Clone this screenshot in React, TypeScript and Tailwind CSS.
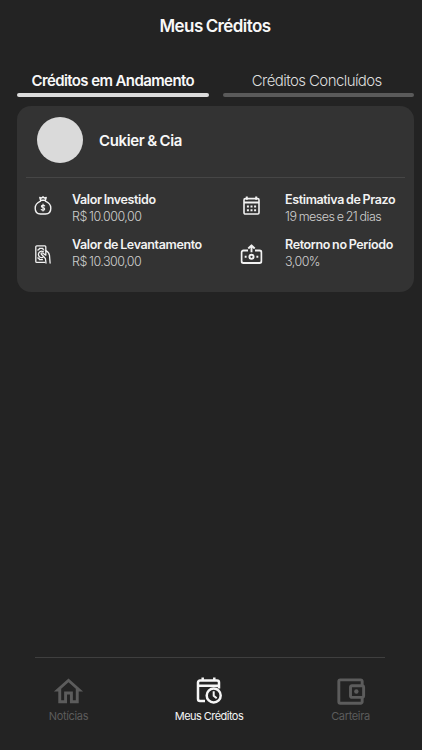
import type { ReactNode } from "react";
import { MdOutlineAccountBalanceWallet, MdOutlineHome } from "react-icons/md";

export default function MeusCreditos() {
  return (
    <div className="flex h-[750px] w-[422px] flex-col overflow-hidden bg-[#232323] font-['Inter',sans-serif] text-white [word-spacing:-0.7px]">
      <header className="h-[72px] pt-[14px] pl-2 text-center">
        <h1 className="text-[17px] leading-[25px] font-semibold tracking-[-0.59px] text-[#f8f8f8]">Meus Créditos</h1>
      </header>

      {/* Tabs */}
      <nav className="mx-[17px] mr-[8px] grid shrink-0 grid-cols-2 gap-[14px] text-center text-[15px] leading-[18px]">
        <button className="h-[25px] border-0 text-[#f8f8f8]">
          <span className="block h-[21px] font-semibold tracking-[-0.6px]">Créditos em Andamento</span>
          <span className="block h-[3.5px] rounded-full bg-[#dcdcdc]" />
        </button>
        <button className="h-[25px] border-0 text-[#dedede]">
          <span className="block h-[21px] pr-[3px] font-light tracking-[-0.58px]">Créditos Concluídos</span>
          <span className="block h-[3.5px] rounded-full bg-[#5a5a5a]" />
        </button>
      </nav>

      {/* Credit card */}
      <section className="mt-[9px] mr-[8px] ml-[17px] h-[186px] shrink-0 rounded-[14px] bg-[#333333] px-[9px]">
        <div className="flex h-[72px] items-center border-b border-[#464646] pb-[3px] pl-[11px]">
          <div className="size-[46px] rounded-full bg-[#dadada]" />
          <h2 className="ml-4 pt-[2px] text-[15px] font-semibold tracking-[-0.34px] text-[#f8f8f8]">Cukier &amp; Cia</h2>
        </div>
        <div className="grid grid-cols-[208px_1fr] gap-y-[11px] pt-[13px]">
          <Detail icon={<MoneyBagIcon />} label="Valor Investido" value="R$ 10.000,00" iconClass="h-[29px]" />
          <Detail
            icon={<CalendarIcon />}
            label="Estimativa de Prazo"
            value="19 meses e 21 dias"
            iconClass="h-[29px]"
            textClass="ml-[17px]"
          />
          <Detail icon={<CashHandIcon />} label="Valor de Levantamento" value="R$ 10.300,00" iconClass="h-[36px]" />
          <Detail
            icon={<CashReturnIcon />}
            label="Retorno no Período"
            value="3,00%"
            iconClass="h-[36px]"
            textClass="ml-[17px]"
          />
        </div>
      </section>

      {/* Bottom navigation */}
      <footer className="mr-[37px] ml-[35px] mt-auto h-[93px] shrink-0 border-t border-[#3f3f3f] pt-[16px] text-[11px]">
        <div className="flex justify-between">
          <NavItem className="w-[67px] tracking-[-0.35px] text-[#5c5c5c]" icon={<MdOutlineHome size={35} />} label="Notícias" />
          <NavItem className="w-[80px] tracking-[-0.55px] text-[#f5f5f5]" icon={<CalendarClockIcon />} label="Meus Créditos" />
          <NavItem
            className="w-[69px] tracking-[-0.35px] text-[#5c5c5c]"
            icon={<MdOutlineAccountBalanceWallet size={35} />}
            label="Carteira"
          />
        </div>
      </footer>
    </div>
  );
}

type DetailProps = { icon: ReactNode; label: string; value: string; iconClass: string; textClass?: string };

function Detail({ icon, label, value, iconClass, textClass = "ml-3" }: DetailProps) {
  return (
    <div className="flex h-[34px] items-start">
      <div className={`flex w-[34px] shrink-0 items-center justify-center ${iconClass}`}>{icon}</div>
      <div className={`whitespace-nowrap text-[12.5px] leading-[17px] ${textClass}`}>
        <p className="font-semibold tracking-[-0.37px] text-[#f2f2f2]">{label}</p>
        <p className="font-light tracking-[-0.52px] text-[#cfcfcf]">{value}</p>
      </div>
    </div>
  );
}

function NavItem({ icon, label, className }: { icon: ReactNode; label: string; className: string }) {
  return (
    <button className={`flex flex-col items-center ${className}`}>
      <span className="flex h-[34px] items-center">{icon}</span>
      <span className="whitespace-nowrap leading-4">{label}</span>
    </button>
  );
}

function MoneyBagIcon() {
  return (
    <svg width="18" height="19" viewBox="0 0 18 19" fill="none" stroke="#f2f2f2" strokeWidth="1.4" strokeLinecap="round" strokeLinejoin="round">
      <path d="M6.6 4.2 5.8 1.5l1.7.6L9 .9l1.5 1.2 1.7-.6-.8 2.7Z" />
      <path d="M6.6 5.2C3 6.7 1.2 9.2 1.2 12.2c0 3.6 2.2 5.8 5.3 5.8h5c3.1 0 5.3-2.2 5.3-5.8 0-3-1.8-5.5-5.4-7" />
      <path d="M10.7 9.9C9.5 8.7 7.3 9 7.4 10.4c.1 1.4 3.3.9 3.3 2.5 0 1.3-2.2 1.7-3.5.6M9 8v7" strokeWidth="1.1" />
    </svg>
  );
}

function CalendarIcon() {
  return (
    <svg width="17" height="19" viewBox="0 0 17 19" fill="none" stroke="#f2f2f2" strokeWidth="1.6">
      <rect x="1" y="2.6" width="15" height="15.4" rx="1.3" />
      <path d="M1 6.5h15M3.8.5v3.3M13.2.5v3.3" strokeWidth="2" />
      <path d="M3.9 10.5h2M7.5 10.5h2M11.1 10.5h2M3.9 14.2h2M7.5 14.2h2M11.1 14.2h2" strokeWidth="2" />
    </svg>
  );
}

function CashHandIcon() {
  return (
    <svg width="16" height="19" viewBox="0 0 16 19" fill="none" stroke="#f2f2f2" strokeWidth="1.3" strokeLinecap="round" strokeLinejoin="round">
      <path d="M10.8 5.500V1.800a1 1 0 0 0-1-1h-8a1 1 0 0 0-1 1v14.600a1 1 0 0 0 1 1h8" />
      <path d="M2.900 5c1 0 1.500-.8 1.500-1.700h3.400c0 .9.300 1.500 1 1.700M2.900 13c1 0 1.500.8 1.500 1.700h3" />
      <path d="M8.300 6.700A3.200 3.200 0 1 0 7.800 12.400" />
      <path d="M10.800 5.700c2 1 3.400 2.400 3.700 4.800l.6 7.500M10.800 5.700v4.500L7.600 8c-1-.5-1.900.4-1.200 1.200l4 4.300.6 4.500" />
    </svg>
  );
}

function CashReturnIcon() {
  return (
    <svg width="22" height="20" viewBox="0 0 22 20" fill="none" stroke="#f2f2f2" strokeWidth="1.9" strokeLinejoin="round" className="translate-x-[0.5px]">
      <path d="M7.5 6.500H3a2 2 0 0 0-2 2V17a2 2 0 0 0 2 2h16a2 2 0 0 0 2-2V8.500a2 2 0 0 0-2-2h-4.500" />
      <path d="M11 8.200V1.500M7.800 4.500 11 1.300l3.200 3.200" />
      <circle cx="11" cy="12.8" r="2.1" />
      <path d="M4.200 12.800h1.900M15.900 12.800h1.900" />
    </svg>
  );
}

function CalendarClockIcon() {
  return (
    <svg width="26" height="28" viewBox="0 0 26 28" fill="none" stroke="currentColor" strokeWidth="2.5">
      <path d="M9 24H4a2 2 0 0 1-2-2V5.500a2 2 0 0 1 2-2h17a2 2 0 0 1 2 2v6M2 8.700h21M6.700.5v4M18.300.5v4" />
      <circle cx="17.700" cy="18.500" r="7" />
      <path d="M17.700 14.300v4.500l3 2.500" strokeWidth="2" />
    </svg>
  );
}
